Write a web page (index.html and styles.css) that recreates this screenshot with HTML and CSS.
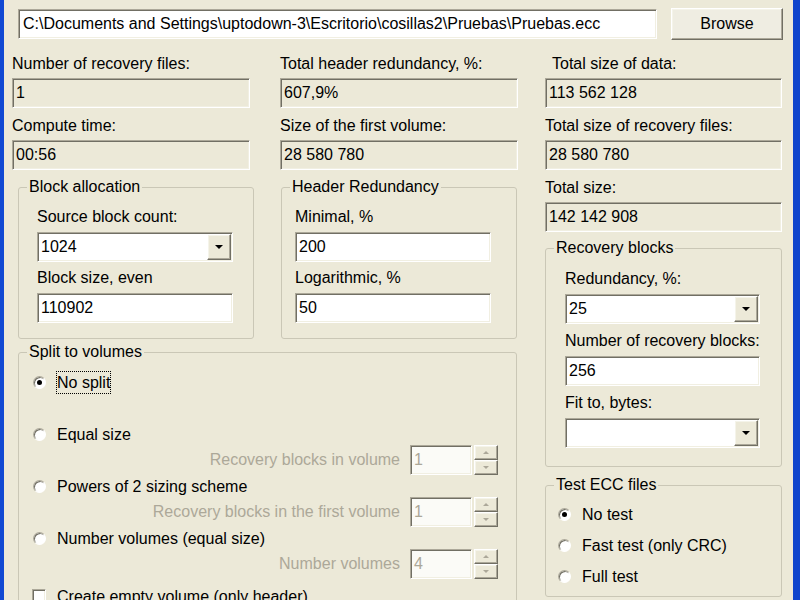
FILE: index.html
```html
<!DOCTYPE html>
<html>
<head>
    <title>ECC file options</title>
    <link rel="stylesheet" href="styles.css">
</head>
<body>
    <div class="window">
        <div class="file-row">
            <div class="edit path">C:\Documents and Settings\uptodown-3\Escritorio\cosillas2\Pruebas\Pruebas.ecc</div>
            <div class="raised browse">Browse</div>
        </div>

        <div class="main">
            <div class="left">
                <div class="info">
                    <div class="field">
                        <div class="caption">Number of recovery files:</div>
                        <div class="edit ro">1</div>
                    </div>
                    <div class="field">
                        <div class="caption">Total header redundancy, %:</div>
                        <div class="edit ro">607,9%</div>
                    </div>
                    <div class="field">
                        <div class="caption">Compute time:</div>
                        <div class="edit ro">00:56</div>
                    </div>
                    <div class="field">
                        <div class="caption">Size of the first volume:</div>
                        <div class="edit ro">28 580 780</div>
                    </div>
                </div>

                <div class="groups">
                    <fieldset class="group">
                        <legend>Block allocation</legend>
                        <div class="group-body pad-block">
                            <div class="caption">Source block count:</div>
                            <div class="edit combo">
                                <span class="value">1024</span>
                                <span class="raised drop"><i class="arrow"></i></span>
                            </div>
                            <div class="caption next">Block size, even</div>
                            <div class="edit input">110902</div>
                        </div>
                    </fieldset>
                    <fieldset class="group">
                        <legend>Header Redundancy</legend>
                        <div class="group-body pad-header">
                            <div class="caption">Minimal, %</div>
                            <div class="edit input">200</div>
                            <div class="caption next">Logarithmic, %</div>
                            <div class="edit input">50</div>
                        </div>
                    </fieldset>
                </div>

                <fieldset class="group split">
                    <legend>Split to volumes</legend>
                    <div class="group-body split-body">
                        <div class="opt">
                            <div class="opt-line"><span class="radio checked"></span><span class="text focus">No split</span></div>
                        </div>
                        <div class="opt">
                            <div class="opt-line"><span class="radio"></span><span class="text">Equal size</span></div>
                            <div class="spin-row">
                                <span class="disabled">Recovery blocks in volume</span>
                                <div class="spin">
                                    <div class="edit spin-edit">1</div>
                                    <div class="spin-btns">
                                        <span class="raised"><i class="tri up"></i></span>
                                        <span class="raised"><i class="tri down"></i></span>
                                    </div>
                                </div>
                            </div>
                        </div>
                        <div class="opt">
                            <div class="opt-line"><span class="radio"></span><span class="text">Powers of 2 sizing scheme</span></div>
                            <div class="spin-row">
                                <span class="disabled">Recovery blocks in the first volume</span>
                                <div class="spin">
                                    <div class="edit spin-edit">1</div>
                                    <div class="spin-btns">
                                        <span class="raised"><i class="tri up"></i></span>
                                        <span class="raised"><i class="tri down"></i></span>
                                    </div>
                                </div>
                            </div>
                        </div>
                        <div class="opt">
                            <div class="opt-line"><span class="radio"></span><span class="text">Number volumes (equal size)</span></div>
                            <div class="spin-row">
                                <span class="disabled">Number volumes</span>
                                <div class="spin">
                                    <div class="edit spin-edit">4</div>
                                    <div class="spin-btns">
                                        <span class="raised"><i class="tri up"></i></span>
                                        <span class="raised"><i class="tri down"></i></span>
                                    </div>
                                </div>
                            </div>
                        </div>
                        <div class="opt-line check-line"><span class="checkbox"></span><span class="text">Create empty volume (only header)</span></div>
                    </div>
                </fieldset>
            </div>

            <div class="right">
                <div class="field">
                    <div class="caption indent">Total size of data:</div>
                    <div class="edit ro">113 562 128</div>
                </div>
                <div class="field">
                    <div class="caption">Total size of recovery files:</div>
                    <div class="edit ro">28 580 780</div>
                </div>
                <div class="field">
                    <div class="caption">Total size:</div>
                    <div class="edit ro">142 142 908</div>
                </div>

                <fieldset class="group recovery">
                    <legend>Recovery blocks</legend>
                    <div class="group-body pad-recovery">
                        <div class="caption">Redundancy, %:</div>
                        <div class="edit combo">
                            <span class="value">25</span>
                            <span class="raised drop"><i class="arrow"></i></span>
                        </div>
                        <div class="caption next">Number of recovery blocks:</div>
                        <div class="edit input">256</div>
                        <div class="caption next">Fit to, bytes:</div>
                        <div class="edit combo">
                            <span class="value"></span>
                            <span class="raised drop"><i class="arrow"></i></span>
                        </div>
                    </div>
                </fieldset>

                <fieldset class="group test">
                    <legend>Test ECC files</legend>
                    <div class="group-body pad-test">
                        <div class="opt-line"><span class="radio checked"></span><span class="text">No test</span></div>
                        <div class="opt-line"><span class="radio"></span><span class="text">Fast test (only CRC)</span></div>
                        <div class="opt-line"><span class="radio"></span><span class="text">Full test</span></div>
                    </div>
                </fieldset>
            </div>
        </div>
    </div>
</body>
</html>
```

FILE: styles.css
```css
* {
    box-sizing: border-box;
}
html, body {
    margin: 0;
}
body {
    font-family: "Liberation Sans", Arial, sans-serif;
    font-size: 16px;
    color: #000;
    background: #ece9d8;
}
.window {
    width: 800px;
    height: 600px;
    overflow: hidden;
    background: #ece9d8;
    border-left: 4px solid #1149d3;
    border-right: 7px solid #0e44cc;
}

/* sunken edit box and raised button faces */
.edit {
    display: flex;
    align-items: center;
    height: 30px;
    padding-left: 3px;
    white-space: nowrap;
    overflow: hidden;
    background: #fff;
    border: 1px solid;
    border-color: #aca899 #fff #fff #aca899;
    box-shadow: inset 1px 1px 0 #716f64, inset -1px -1px 0 #f1efe2;
}
.raised {
    display: flex;
    align-items: center;
    justify-content: center;
    background: #ece9d8;
    border: 1px solid;
    border-color: #fff #716f64 #716f64 #fff;
    box-shadow: inset -1px -1px 0 #aca899, inset 1px 1px 0 #f5f4ea;
}

.file-row {
    display: flex;
    align-items: center;
    padding: 8px 0 0 14px;
}
.path {
    width: 639px;
    padding-left: 4px;
}
.browse {
    width: 112px;
    height: 32px;
    margin-left: 14px;
    background: #efede2;
}

.main {
    display: flex;
    margin-top: 15px;
}
.left {
    width: 506px;
    margin-left: 8px;
}
.right {
    width: 237px;
    margin-left: 27px;
}

.caption {
    line-height: 18px;
    margin-bottom: 5px;
    white-space: nowrap;
}
.caption.indent {
    padding-left: 7px;
}
.ro {
    background: #ece9d8;
}
.info {
    display: grid;
    grid-template-columns: 238px 238px;
    column-gap: 30px;
    row-gap: 9px;
}
.right .field + .field {
    margin-top: 9px;
}

/* group boxes */
.group {
    margin: 0;
    padding: 0;
    min-width: 0;
    border: 1px solid #cac7b6;
    border-radius: 3px;
}
.group legend {
    margin-left: 8px;
    padding: 0 2px;
    line-height: 18px;
}
.groups {
    display: flex;
    gap: 27px;
    margin: 8px 0 0 6px;
}
.groups .group {
    width: 236px;
}
.group-body .caption {
    margin-bottom: 6px;
}
.group-body .caption.next {
    margin-top: 7px;
}
.pad-block {
    padding: 12px 0 15px 18px;
}
.pad-header {
    padding: 12px 0 15px 13px;
}
.pad-block .edit,
.pad-header .edit {
    width: 196px;
}

.combo {
    padding-right: 1px;
}
.combo .value {
    flex: 1;
}
.drop {
    width: 24px;
    height: 26px;
}
.arrow {
    width: 0;
    height: 0;
    border-left: 4px solid transparent;
    border-right: 4px solid transparent;
    border-top: 4px solid #000;
}

/* split to volumes */
.split {
    width: 499px;
    margin: 4px 0 0 6px;
}
.split-body {
    padding: 10px 18px 0 14px;
}
.opt {
    height: 52px;
}
.opt-line {
    display: flex;
    align-items: center;
    height: 22px;
    white-space: nowrap;
}
.opt-line .text {
    margin-left: 10px;
    border: 1px dotted transparent;
    line-height: 21px;
}
.opt-line .text.focus {
    border-color: #000;
}
.check-line {
    margin: 6px 0 0 -1px;
}
.radio {
    position: relative;
    width: 13px;
    height: 13px;
    flex: none;
    border-radius: 50%;
    background: #fff;
    border: 1px solid;
    border-color: #aca899 #fff #fff #aca899;
    box-shadow: inset 1px 1px 0 #716f64;
}
.radio.checked::after {
    content: "";
    position: absolute;
    left: 3px;
    top: 3px;
    width: 5px;
    height: 5px;
    border-radius: 50%;
    background: #000;
}
.checkbox {
    width: 14px;
    height: 14px;
    flex: none;
    background: #fff;
    border: 1px solid;
    border-color: #aca899 #fff #fff #aca899;
    box-shadow: inset 1px 1px 0 #716f64, inset -1px -1px 0 #f1efe2;
}
.check-line .text {
    margin-left: 10px;
}

.spin-row {
    display: flex;
    justify-content: flex-end;
    align-items: center;
    height: 30px;
}
.disabled {
    color: #aca899;
    white-space: nowrap;
}
.spin {
    display: flex;
    margin-left: 10px;
}
.spin-edit {
    width: 62px;
    color: #aca899;
    background: #fbfbf7;
}
.spin-btns {
    display: flex;
    flex-direction: column;
    width: 24px;
    margin-left: 2px;
}
.spin-btns .raised {
    height: 15px;
}
.tri {
    width: 0;
    height: 0;
    border-left: 3px solid transparent;
    border-right: 3px solid transparent;
}
.tri.up {
    border-bottom: 3px solid #aca899;
}
.tri.down {
    border-top: 3px solid #aca899;
}

/* right column groups */
.recovery {
    margin-top: 7px;
}
.pad-recovery {
    padding: 13px 0 18px 19px;
}
.pad-recovery .caption.next {
    margin-top: 8px;
}
.pad-recovery .edit {
    width: 195px;
}
.test {
    margin-top: 9px;
}
.pad-test {
    padding: 9px 0 9px 12px;
}
.pad-test .opt-line + .opt-line {
    margin-top: 9px;
}
```
